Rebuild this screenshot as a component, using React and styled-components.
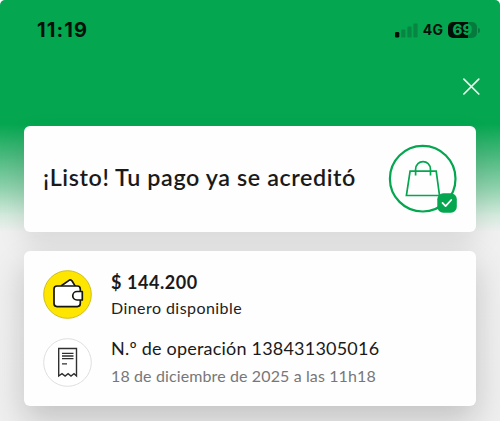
import React from "react";
import styled, { createGlobalStyle } from "styled-components";

const Global = createGlobalStyle`
  * { box-sizing: border-box; }
  html, body { margin: 0; background: #fff; }
  body { font-family: Lato, "Open Sans", sans-serif; color: #1a1a1a; }
  svg { display: block; flex: none; }
`;

const Screen = styled.main`
  width: 500px;
  height: 421px;
  overflow: hidden;
  border-radius: 5px 5px 0 0;
  background: linear-gradient(#04a650 0, #04a650 124px, #48b97c 155px, #8fd2ad 188px, #d5ebde 216px, #f0f0f0 232px, #efefef 100%);
`;

const StatusBar = styled.header`
  display: flex;
  align-items: center;
  justify-content: space-between;
  height: 60px;
  padding: 0 20px 0 37px;
  font-family: Inter, sans-serif;
  color: #02120a;
`;

const Clock = styled.time`
  font-size: 20px;
  line-height: 24px;
  font-weight: 700;
  letter-spacing: 1.1px;
`;

const Indicators = styled.div`
  display: flex;
  align-items: center;
`;

const Network = styled.span`
  margin: 0 5px 0 5px;
  font-size: 14px;
  line-height: 18px;
  font-weight: 700;
  letter-spacing: 0.1px;
`;

const Battery = styled.span`
  width: 29px;
  height: 16px;
  border-radius: 5px;
  background: linear-gradient(90deg, #010f07 69%, #067a3c 69%);
  color: #04a650;
  font-size: 15px;
  line-height: 16px;
  font-weight: 800;
  text-align: center;
`;

const BatteryTip = styled.span`
  width: 2px;
  height: 5px;
  margin-left: 1px;
  border-radius: 0 2px 2px 0;
  background: #067a3c;
`;

const Toolbar = styled.div`
  display: flex;
  justify-content: flex-end;
  height: 66px;
  padding: 17px 19px 0 0;
`;

const CloseButton = styled.button`
  width: 20px;
  height: 20px;
  padding: 0;
  border: 0;
  background: none;
`;

const Cards = styled.div`
  display: flex;
  flex-direction: column;
  gap: 19px;
  padding: 0 24px;
`;

const Card = styled.section`
  border-radius: 6px;
  background: #fefefe;
`;

const ResultCard = styled(Card)`
  display: flex;
  align-items: center;
  justify-content: space-between;
  height: 106px;
  padding: 0 18px 0 19px;
  box-shadow: 0 12px 28px rgba(0, 0, 0, 0.1);
`;

const DetailCard = styled(Card)`
  display: flex;
  flex-direction: column;
  gap: 19px;
  height: 154.5px;
  padding: 19px 19px 0;
  box-shadow: 0 14px 32px rgba(0, 0, 0, 0.19);
`;

const Title = styled.h1`
  margin: 0 0 4px;
  font-size: 23.3px;
  line-height: 28px;
  font-weight: 600;
  letter-spacing: 0.6px;
  white-space: nowrap;
`;

const Row = styled.div`
  display: flex;
  gap: 19px;
  height: 49px;
`;

const Details = styled.div`
  display: flex;
  flex-direction: column;
  margin-top: ${(p) => p.$shift}px;
  white-space: nowrap;
`;

const Primary = styled.span`
  font-size: 18px;
  line-height: 23px;
  font-weight: ${(p) => (p.$strong ? 700 : 400)};
  letter-spacing: ${(p) => p.$tracking}px;
`;

const Secondary = styled.span`
  margin-top: ${(p) => p.$gap}px;
  font-size: 16px;
  line-height: 22px;
  color: ${(p) => (p.$muted ? "#777" : "#222")};
  letter-spacing: ${(p) => p.$tracking}px;
`;

const Signal = () => (
  <svg width="23" height="15" viewBox="0 0 23 15">
    <rect x="0" y="9" width="4.3" height="5.5" rx="1.2" fill="#010f07" />
    <g fill="#068642">
      <rect x="6.2" y="6.5" width="4.2" height="8" rx="1.2" />
      <rect x="12.4" y="3.5" width="4.2" height="11" rx="1.2" />
      <rect x="18.4" y="0.5" width="4.2" height="14" rx="1.2" />
    </g>
  </svg>
);

const CloseIcon = () => (
  <svg width="20" height="20" viewBox="0 0 20 20" fill="none" stroke="#e2fbea" strokeWidth="1.7" strokeLinecap="round">
    <path d="M2.9 2.2 17.8 17M17.8 2.2 2.9 17" />
  </svg>
);

const BagBadge = () => (
  <svg width="70" height="70" viewBox="0 0 70 70" fill="none" stroke="#04a650">
    <circle cx="34.7" cy="34.7" r="32.8" strokeWidth="2.2" />
    <path d="M22.1 27.2H48.2L51.5 51.5H18.4Z" strokeWidth="1.7" />
    <path d="M27.6 31.5V25.6C27.6 14.9 42.5 14.9 42.5 25.6V31.5" strokeWidth="1.7" />
    <rect x="49.3" y="49.3" width="19.5" height="19.5" rx="6" fill="#04a650" stroke="none" />
    <path d="M54.5 58.9 57.6 62.1 63.2 56" stroke="#fff" strokeWidth="1.8" strokeLinecap="round" strokeLinejoin="round" />
  </svg>
);

const WalletIcon = () => (
  <svg width="49" height="49" viewBox="0 0 49 49" fill="none" stroke="#16160d" strokeWidth="1.7" strokeLinejoin="round">
    <circle cx="24.5" cy="24.5" r="23.8" fill="#ffe600" stroke="#cdbd19" strokeWidth="1" />
    <path d="m18 16 8.4-5.9Q28 9.2 29.1 11l3.1 5.1" fill="#fff" />
    <rect x="11" y="16" width="26.3" height="20.6" rx="3" fill="#fff" />
    <path d="M39.3 21.5H34a4.25 4.25 0 0 0 0 8.5h5.3Z" fill="#fff" />
  </svg>
);

const ReceiptIcon = () => (
  <svg width="49" height="49" viewBox="0 0 49 49" fill="none" stroke="#303030">
    <circle cx="24.5" cy="24.5" r="23.8" fill="#fff" stroke="#dedede" />
    <path d="M15.7 10.5H33.5V38L31 35.7 28 38.1 25.1 35.7 22.1 38.1 19 35.7 15.7 38Z" strokeWidth="1.4" />
    <path d="M19 15.3H30.5M19 18H30.5M19 20.7H30.5M19 25.8H24" strokeWidth="1.3" />
  </svg>
);

export default function App() {
  return (
    <>
      <Global />
      <Screen>
        <StatusBar>
          <Clock>11:19</Clock>
          <Indicators>
            <Signal />
            <Network>4G</Network>
            <Battery>69</Battery>
            <BatteryTip />
          </Indicators>
        </StatusBar>
        <Toolbar>
          <CloseButton aria-label="Cerrar"><CloseIcon /></CloseButton>
        </Toolbar>
        <Cards>
          <ResultCard>
            <Title>¡Listo! Tu pago ya se acreditó</Title>
            <BagBadge />
          </ResultCard>
          <DetailCard>
            <Row>
              <WalletIcon />
              <Details $shift={1}>
                <Primary $strong $tracking={0.57}>$ 144.200</Primary>
                <Secondary $gap={3} $tracking={0.44}>Dinero disponible</Secondary>
              </Details>
            </Row>
            <Row>
              <ReceiptIcon />
              <Details $shift={-1}>
                <Primary $tracking={0.21}>N.º de operación 138431305016</Primary>
                <Secondary $muted $gap={5} $tracking={0.12}>18 de diciembre de 2025 a las 11h18</Secondary>
              </Details>
            </Row>
          </DetailCard>
        </Cards>
      </Screen>
    </>
  );
}
